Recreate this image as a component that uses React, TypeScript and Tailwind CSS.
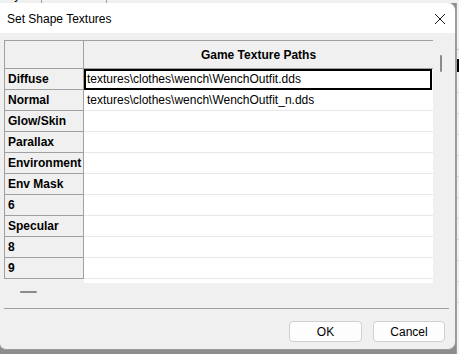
const rows = ['Diffuse', 'Normal', 'Glow/Skin', 'Parallax', 'Environment', 'Env Mask', '6', 'Specular', '8', '9'];
const paths: Record<number, string> = {
  0: 'textures\\clothes\\wench\\WenchOutfit.dds',
  1: 'textures\\clothes\\wench\\WenchOutfit_n.dds',
};

export default function App() {
  return (
    <div className="w-[459px] h-[354px] bg-[#8c8c8c] flex flex-col overflow-hidden font-['Liberation_Sans',Arial,sans-serif] text-[12px] text-black">
      {/* app behind the dialog */}
      <div className="h-[3px] bg-[#f0f0f0] overflow-hidden flex">
        <div className="flex -mt-[12px] leading-[15px]">
          <span className="w-[42px] pl-[1px] border-r border-[#a0a0a0]">ctry</span>
          <span className="w-[65px] pl-[4px] border-r border-[#a0a0a0]">Extra Data</span>
          <span className="pl-[4px]">Coordinates</span>
        </div>
      </div>

      <div className="flex flex-1">
        {/* dialog */}
        <div className="w-[456px] h-[347px] bg-[#f0f0f0] rounded-r-lg rounded-bl-md border-r border-b border-[#9a9a9a] flex flex-col overflow-hidden">
          <div className="h-[30px] bg-white flex items-center justify-between pl-[7px] pr-[9px] shrink-0">
            <span className="text-[12px] mt-[1px]">Set Shape Textures</span>
            <svg width="12" height="12" viewBox="0 0 12 12" className="mt-[1px]">
              <path d="M1 1 L11 11 M11 1 L1 11" stroke="#1a1a1a" strokeWidth="1" />
            </svg>
          </div>

          <div className="flex flex-col pt-[7px] pl-[4px] pr-[6px]">
            {/* table widget */}
            <div className="flex flex-col h-[260px]">
              <div className="flex h-[243px]">
                <div className="w-[430px] flex flex-col bg-white">
                  <div className="flex h-[29px] bg-[#f0f0f0]">
                    <div className="w-[80px] border border-[#a0a0a0]" />
                    <div className="flex-1 border-t border-b border-[#a0a0a0] flex items-center justify-center font-bold">
                      Game Texture Paths
                    </div>
                  </div>
                  {rows.map((r, i) => (
                    <div key={r} className="flex h-[21px]">
                      <div className="w-[80px] bg-[#f0f0f0] border-l border-r border-b border-[#a0a0a0] pl-[3px] font-bold leading-[20px]">
                        {r}
                      </div>
                      {i === 0 ? (
                        <div className="flex-1 border-2 border-black pl-[1px] leading-[17px] mr-[1px]">{paths[0]}</div>
                      ) : (
                        <div className="flex-1 border-b border-[#e8e8e8] pl-[3px] leading-[20px]">{paths[i] ?? ''}</div>
                      )}
                    </div>
                  ))}
                  <div className="flex flex-1">
                    <div className="w-[80px] bg-[#f0f0f0]" />
                    <div className="flex-1 bg-white" />
                  </div>
                </div>
                <div className="w-[16px] bg-[#f0f0f0] flex justify-center pt-[15px]">
                  <div className="w-[2px] h-[17px] bg-[#8a8a8a] rounded-full" />
                </div>
              </div>
              <div className="h-[17px] bg-[#f0f0f0] flex items-center pl-[16px]">
                <div className="w-[17px] h-[2px] bg-[#8a8a8a] rounded-full" />
              </div>
            </div>

            <div className="h-[1px] bg-[#a0a0a0] mt-[8px]" />

            <div className="flex justify-end gap-[11px] mt-[12px] pr-[4px]">
              <button className="w-[73px] h-[21px] bg-[#fdfdfd] border border-[#d0d0d0] rounded-[4px] leading-[18px]">OK</button>
              <button className="w-[72px] h-[21px] bg-[#fdfdfd] border border-[#d0d0d0] rounded-[4px] leading-[18px]">Cancel</button>
            </div>
          </div>
        </div>

        {/* app behind, right edge */}
        <div className="flex-1 bg-[#f0f0f0] border-l border-[#a0a0a0] flex flex-col pt-[46px]">
          <div className="h-[1px] bg-[#c8c8c8]" />
          <div className="h-[9px]" />
          <div className="h-[13px] bg-black" />
          {[0, 1, 2, 3, 4, 5, 6, 7, 8, 9, 10].map((k) => (
            <div key={k} className="h-[21px] border-b border-[#d8d8d8]" />
          ))}
        </div>
      </div>
    </div>
  );
}
